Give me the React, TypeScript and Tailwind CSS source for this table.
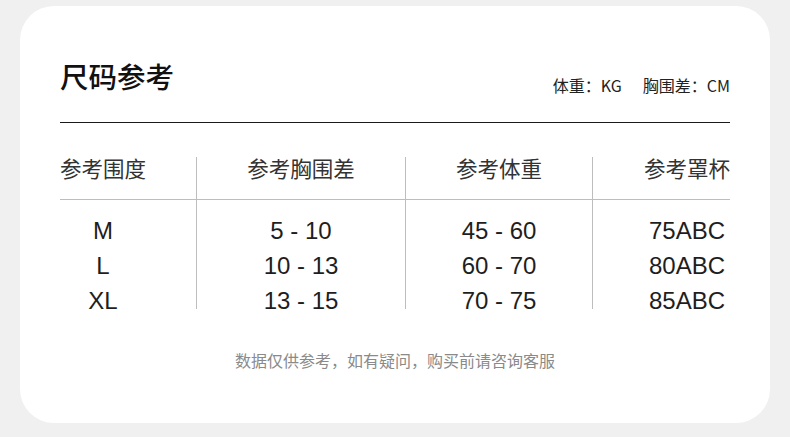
import React from 'react';

const cjk = "font-['Noto_Sans_CJK_SC',sans-serif]";
const num = "font-['Liberation_Sans',Arial,sans-serif]";

const columns = [
  { title: '参考围度', values: ['M', 'L', 'XL'], width: 'w-[136px]', head: 'justify-start', body: 'w-[86px] items-center' },
  { title: '参考胸围差', values: ['5 - 10', '10 - 13', '13 - 15'], width: 'w-[209px] border-l', head: 'justify-center', body: 'items-center' },
  { title: '参考体重', values: ['45 - 60', '60 - 70', '70 - 75'], width: 'w-[187px] border-l', head: 'justify-center', body: 'items-center' },
  { title: '参考罩杯', values: ['75ABC', '80ABC', '85ABC'], width: 'w-[138px] border-l', head: 'justify-end', body: 'w-[86px] ml-auto items-center' },
];

export default function App() {
  return (
    <div className="min-h-screen bg-[#f0f0f0] px-5 pt-[6px] pb-[14px]">
      <div className="h-[417px] rounded-[34px] bg-white px-10 pt-[50px]">
        {/* Title */}
        <div className="flex items-end justify-between border-b border-[#1a1a1a] pb-[26px]">
          <h1 className={`${cjk} text-[28.5px] leading-[40px] font-medium text-[#111]`}>尺码参考</h1>
          <p className={`${cjk} mb-[1px] text-[16px] leading-[20px] text-[#222]`}>
            体重：KG<span className="ml-[21px]">胸围差：CM</span>
          </p>
        </div>

        {/* Table */}
        <div className="mt-[34px] flex">
          {columns.map((col) => (
            <div key={col.title} className={`${col.width} h-[152px] border-[#bdbdbd]`}>
              <div className={`flex h-[43px] border-b border-[#bdbdbd] ${col.head}`}>
                <span className={`${cjk} text-[21.5px] leading-[21px] text-[#333]`}>{col.title}</span>
              </div>
              <div className={`flex flex-col pt-[13px] ${col.body}`}>
                {col.values.map((v) => (
                  <span key={v} className={`${num} text-[24px] leading-[35px] text-[#1e1e1e]`}>{v}</span>
                ))}
              </div>
            </div>
          ))}
        </div>

        {/* Footer */}
        <p className={`${cjk} mt-[41px] text-center text-[16px] leading-[20px] text-[#8a8a8a]`}>
          数据仅供参考，如有疑问，购买前请咨询客服
        </p>
      </div>
    </div>
  );
}
